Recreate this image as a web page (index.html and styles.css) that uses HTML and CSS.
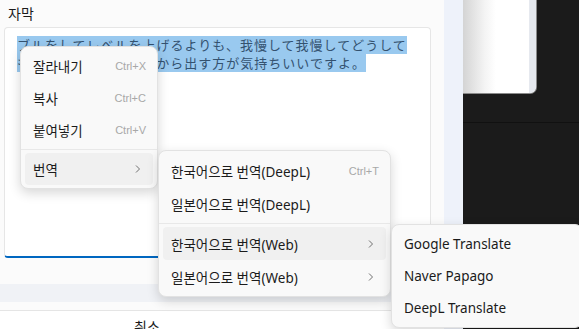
FILE: index.html
```html
<!DOCTYPE html>
<html>
<head>
  <title>subtitle editor</title>
  <link rel="stylesheet" href="styles.css">
</head>
<body>

  <div class="layout">
    <div class="panel">
      <div class="label">자막</div>
      <div class="textbox">
        <div class="sel">ブルをしてレベルを上げるよりも、我慢して我慢してどうして</div>
        <div class="sel">も我慢できなくなってから出す方が気持ちいいですよ。</div>
      </div>
      <div class="band"></div>
      <div class="footer">
        <div class="btn">취소</div>
      </div>
    </div>
    <div class="strip"></div>
    <div class="preview">
      <div class="win"><div class="track"></div></div>
      <div class="shade"></div>
      <div class="dark"></div>
    </div>
  </div>

  <!-- context menu -->
  <div class="menu menu-main">
    <div class="item"><span>잘라내기</span><span class="key">Ctrl+X</span></div>
    <div class="item"><span>복사</span><span class="key">Ctrl+C</span></div>
    <div class="item"><span>붙여넣기</span><span class="key">Ctrl+V</span></div>
    <div class="sep"></div>
    <div class="item hover"><span>번역</span>
      <svg class="chev" width="6" height="10" viewBox="0 0 6 10"><path d="M1 1.5l3.5 3.5-3.5 3.5" fill="none" stroke="#707070" stroke-width="1"/></svg>
    </div>
  </div>

  <div class="menu menu-sub">
    <div class="item"><span>한국어으로 번역(DeepL)</span><span class="key">Ctrl+T</span></div>
    <div class="item"><span>일본어으로 번역(DeepL)</span></div>
    <div class="sep"></div>
    <div class="item hover"><span>한국어으로 번역(Web)</span>
      <svg class="chev" width="6" height="10" viewBox="0 0 6 10"><path d="M1 1.5l3.5 3.5-3.5 3.5" fill="none" stroke="#707070" stroke-width="1"/></svg>
    </div>
    <div class="item"><span>일본어으로 번역(Web)</span>
      <svg class="chev" width="6" height="10" viewBox="0 0 6 10"><path d="M1 1.5l3.5 3.5-3.5 3.5" fill="none" stroke="#707070" stroke-width="1"/></svg>
    </div>
  </div>

  <div class="menu menu-web">
    <div class="item"><span>Google Translate</span></div>
    <div class="item"><span>Naver Papago</span></div>
    <div class="item"><span>DeepL Translate</span></div>
  </div>

</body>
</html>
```

FILE: styles.css
```css
* {
  box-sizing: border-box;
}
body {
  margin: 0;
  width: 579px;
  height: 329px;
  overflow: hidden;
  position: relative;
  font-family: "Noto Sans", "Noto Sans CJK KR", sans-serif;
  color: #1b1b1b;
  background: #fbfbfb;
}
.layout {
  display: flex;
  height: 329px;
}
.panel {
  width: 444px;
  display: flex;
  flex-direction: column;
  background: #fbfbfb;
}
.panel > div {
  flex-shrink: 0;
}
.label {
  padding: 4px 0 0 8px;
  height: 27px;
  font-size: 14px;
  line-height: 20px;
}
.textbox {
  margin-left: 4px;
  width: 427px;
  height: 231px;
  background: #fff;
  border: 1px solid #e6e6e6;
  border-bottom: 2px solid #0067c0;
  border-radius: 4px;
  padding: 8px 12px;
  font-family: "Noto Sans CJK JP", sans-serif;
  font-size: 13px;
  letter-spacing: 1px;
  line-height: 18px;
  color: #34526f;
}
.sel {
  width: fit-content;
  background: #99c9ef;
}
.band {
  margin-top: 26px;
  height: 18px;
  background: #f0f2f6;
}
.panel > .footer {
  margin-top: 8px;
  flex: 1 1 0;
  min-height: 0;
  border-top: 1px solid #e5e5e5;
  background: #fff;
}
.btn {
  width: 294px;
  text-align: center;
  font-size: 14px;
  line-height: 20px;
  padding-top: 6px;
}
.strip {
  width: 19px;
  background: #eef2fa;
}
.preview {
  flex: 1;
  display: flex;
  flex-direction: column;
  background: #1b1b1b;
}
.win {
  width: 74px;
  height: 94px;
  display: flex;
  justify-content: flex-end;
  background: linear-gradient(to right, #d4d4d4, #f4f4f4 30%, #fff 45%);
  border-right: 1px solid #8a8a8a;
  border-bottom: 1px solid #8a8a8a;
  border-bottom-right-radius: 7px;
}
.track {
  width: 7px;
  background: #e6e9ef;
  border-bottom-right-radius: 6px;
}
.shade {
  height: 29px;
  margin-top: -1px;
  position: relative;
  z-index: -1;
  background: linear-gradient(to right, #c6c6c6, #e2e2e2 40%, #efefef);
}
.dark {
  flex: 1;
  background: #1b1b1b;
  border-top: 1px solid #111;
}

/* menus */
.menu {
  position: absolute;
  background: #f9f9f9;
  border: 1px solid #e2e2e2;
  border-radius: 8px;
  padding: 3px 4px;
  box-shadow: 0 4px 12px rgba(0, 0, 0, 0.16);
  font-size: 13.5px;
}
.menu-main {
  left: 20px;
  top: 46px;
  width: 138px;
}
.menu-sub {
  left: 158px;
  top: 150px;
  width: 233px;
}
.menu-sub .item {
  height: 33px;
}
.menu-web {
  left: 391px;
  top: 224px;
  width: 192px;
}
.item {
  display: flex;
  align-items: center;
  justify-content: space-between;
  height: 32px;
  padding: 0 7px 0 8px;
  border-radius: 4px;
}
.item.hover {
  background: #f0f0f0;
}
.key {
  font-family: "Liberation Sans", Arial, sans-serif;
  font-size: 11px;
  color: #a8a8a8;
}
.chev {
  margin-right: 5px;
}
.sep {
  height: 1px;
  margin: 3px -4px;
  background: #e8e8e8;
}
```
